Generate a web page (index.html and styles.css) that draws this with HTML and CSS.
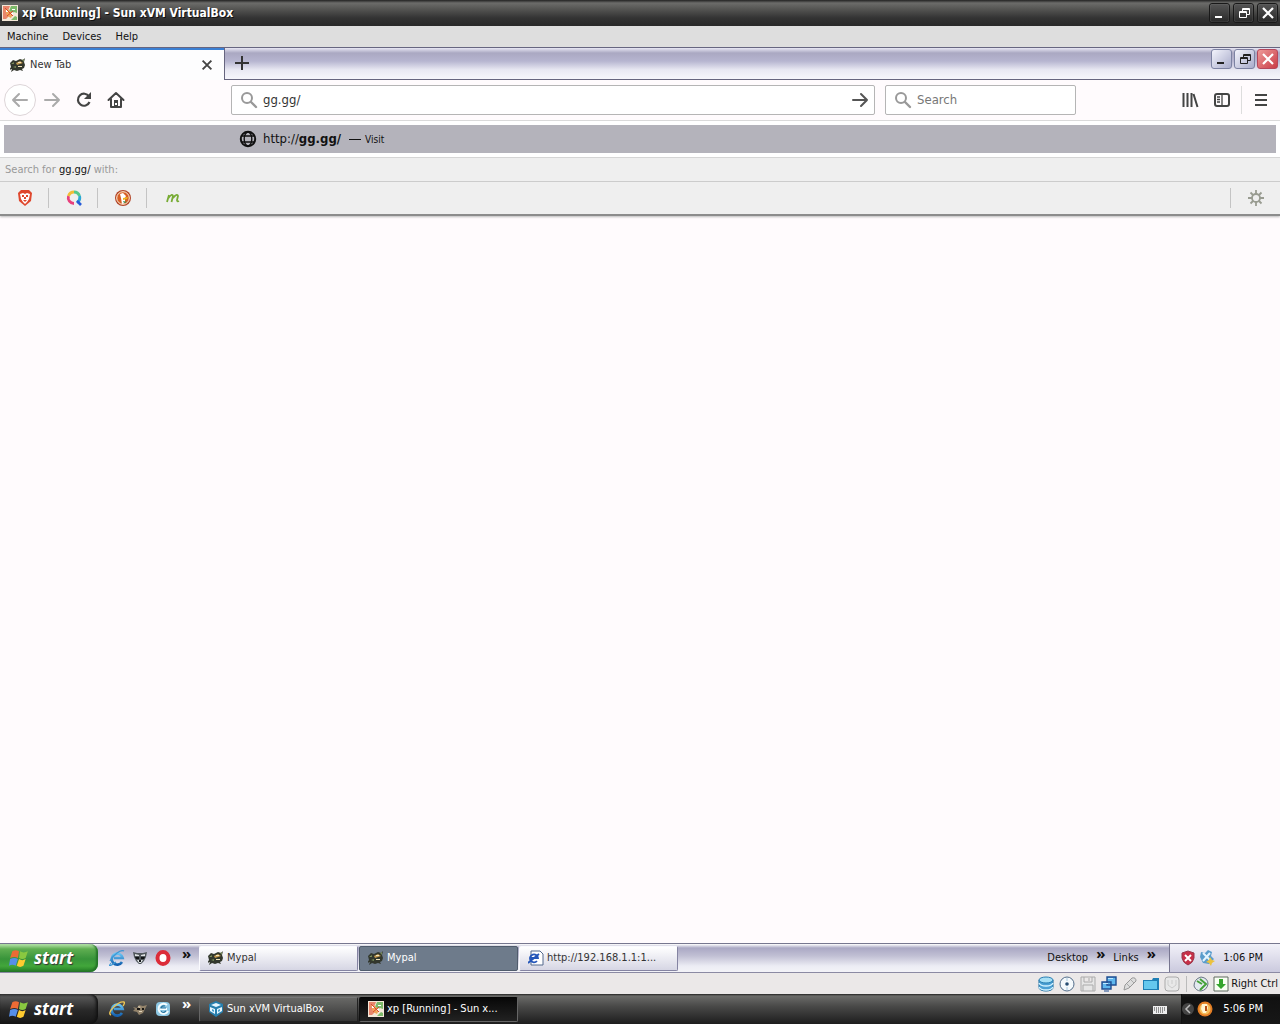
FILE: index.html
```
<!DOCTYPE html>
<html lang="en">
<head>
<meta charset="utf-8">
<title>xp [Running] - Sun xVM VirtualBox</title>
<link rel="stylesheet" href="styles.css">
</head>
<body>
<svg class="sprite" aria-hidden="true">
  <defs>
    <linearGradient id="ie-blue" x1="0" y1="0" x2="0" y2="1"><stop offset="0" stop-color="#68c4f4"/><stop offset="1" stop-color="#1562b0"/></linearGradient>
  </defs>
  <symbol id="vm" viewBox="0 0 16 16"><path fill="#f4e8d8" d="M0 0h16v16H0z"/><path fill="#e8866c" d="M1 1h7l-2 5 3 3-5 5H1z"/><path fill="#7cba6a" d="M9 1h6v7l-3-1-3 2-2-3zM9 15l4-4 2 1v3z"/><path fill="#f1a65a" d="M3 4l4 1 4 4-2 4-4-2z"/><path fill="#fff" d="M4 5h2v2H4zM10 4h3v1h-3zM8 9l3-2v3z"/><path d="M3 3l8 8M5 11l6-5" stroke="#d9492e"/></symbol>
  <symbol id="mypal" viewBox="0 0 16 16"><path fill="#32372d" d="M0 6l3-3 3 1 4-2 3 1 2-2-1 4 1 3-1 3-2 1 1 2-3-1-3 1-3-1-3 2 1-3-3 1 2-3z"/><path fill="#c39a50" d="M6 6l4-2 3 2-3 1-3 1z"/><path fill="#f1e4bc" d="M8 5h3v1H8zM8 9h4v1H8zM2 6h2v1H2z"/><path fill="#758858" d="M1 7l3-2v2zM12 3l2-1v3zM3 10l3-1v2z"/></symbol>
  <symbol id="raccoon" viewBox="0 0 16 16"><path fill="#4f565c" d="M1 2l4 1h6l4-1-1 5-2 4-3 3H7l-3-3-2-4z"/><path fill="#dce0e2" d="M3 4l4 1v1H3zM9 5l4-1v2H9zM5 10h6l-2 3H7z"/><path fill="#101316" d="M3 7h4v2H4zM9 7h4l-1 2H9zM7 10h2v2H7z"/></symbol>
  <symbol id="search" viewBox="0 0 18 18"><circle cx="7" cy="7" r="5" fill="none" stroke="currentColor" stroke-width="2"/><path d="M11 11l5 5" stroke="currentColor" stroke-width="2.4" stroke-linecap="round"/></symbol>
  <symbol id="arrow" viewBox="0 0 18 18"><path d="M2 9h14M10 3l6 6-6 6" fill="none" stroke="currentColor" stroke-width="2" stroke-linecap="round" stroke-linejoin="round"/></symbol>
  <symbol id="close" viewBox="0 0 16 16"><path d="M3 3l10 10M13 3L3 13" stroke="currentColor" stroke-width="2.2"/></symbol>
  <symbol id="minimize" viewBox="0 0 16 16"><path fill="currentColor" d="M3 11h7v2H3z"/></symbol>
  <symbol id="restore" viewBox="0 0 16 16"><path fill="none" stroke="currentColor" d="M6.500 6V3.500h7v6H11M3.500 6.500h7v6h-7zM6 4.500h8M3 7.500h8"/></symbol>
  <symbol id="ie" viewBox="0 0 16 16"><path d="M13 12a5.500 5.500 0 1 1 .7-4H5" fill="none" stroke="url(#ie-blue)" stroke-width="2.600"/><path d="M2 13c-4 5 1 2 5-1M15 1C12-1 4 5 1 11" fill="none" stroke="#3e97d4" stroke-width="1.200"/></symbol>
  <symbol id="ie-gold" viewBox="0 0 16 16"><path d="M13 12a5.500 5.500 0 1 1 .7-4H5" fill="none" stroke="url(#ie-blue)" stroke-width="2.600"/><path d="M2 14c-5-2 7-14 13-13 1 0 0 3-1 4" fill="none" stroke="#efc754" stroke-width="1.400"/></symbol>
  <symbol id="flag" viewBox="0 0 18 18"><path fill="#ed6b35" d="M3 3q3-2 6 0L8 9Q5 7 1 9z"/><path fill="#89c840" d="M10 3q3 2 7 0l-2 6q-3 2-6 0z"/><path fill="#568fe9" d="M1 10q4-2 7 0l-2 6q-3-2-6 0z"/><path fill="#ffcb30" d="M9 10q3 2 6 0l-2 6q-3 2-6 0z"/></symbol>
  <symbol id="discs" viewBox="0 0 16 16"><path fill="#4ca0d4" stroke="#17689c" d="M1 4v8c1 4 13 4 14 0V4"/><ellipse cx="8" cy="4" rx="7" ry="3" fill="#a8e0f5" stroke="#287fb3"/><path d="M1 7c2 4 12 4 14 0M1 11c2 4 12 4 14 0" fill="none" stroke="#d2f2ff" stroke-width="1.500"/></symbol>
  <symbol id="cd" viewBox="0 0 16 16"><circle cx="8" cy="8" r="7" fill="#f4f9fc" stroke="#526d8a"/><circle cx="8" cy="8" r="1.800" fill="#274d72"/><path d="M8 2v3M8 11v3" stroke="#a4c6de"/></symbol>
  <symbol id="floppy" viewBox="0 0 16 16"><path fill="#e6e6e6" stroke="#aaa" d="M1 1h14v14H1zM4 1v5h8V1M3 15V9h10v6M9 2v3"/></symbol>
  <symbol id="network" viewBox="0 0 16 16"><path fill="#5eb7ee" stroke="#1f4d91" stroke-width="1.400" d="M6 1h9v8H6zM1 6h9v7H1z"/><path fill="#bde7ff" d="M7 2h5v1H7zM2 7h5v1H2z"/><path d="M3 15h5" stroke="#1f4d91"/></symbol>
  <symbol id="usb" viewBox="0 0 16 16"><path fill="#ddd" stroke="#999" d="M2 14l1-5 7-7q4-1 4 3L7 12z"/><path d="M5 8l3 3M9 4l3 3" stroke="#aaa"/></symbol>
  <symbol id="folder" viewBox="0 0 16 16"><path fill="#1f7fb5" d="M0 4h9l1-2h6v12H0z"/><path fill="#65c8ee" d="M1 5h13v8H1z"/></symbol>
  <symbol id="mouse" viewBox="0 0 16 16"><rect x="1" y="1" width="14" height="14" rx="3" fill="#e8e8e8" stroke="#aaa"/><path d="M4 4v5l4 3 4-3V4M8 4v4" fill="none" stroke="#ccc"/></symbol>
</svg>

<header class="host-title">
  <svg class="i16"><use href="#vm"/></svg>
  <h1>xp [Running] - Sun xVM VirtualBox</h1>
  <div class="window-controls dark">
    <button aria-label="Minimize"><svg><use href="#minimize"/></svg></button>
    <button aria-label="Restore"><svg><use href="#restore"/></svg></button>
    <button aria-label="Close"><svg><use href="#close"/></svg></button>
  </div>
</header>
<nav class="menu"><button>Machine</button><button>Devices</button><button>Help</button></nav>

<div class="tabs">
  <div class="tab"><svg class="i16"><use href="#mypal"/></svg><span>New Tab</span><button aria-label="Close tab"><svg class="i14"><use href="#close"/></svg></button></div>
  <button class="new-tab" aria-label="New tab"><svg viewBox="0 0 16 16"><path d="M8 1v14M1 8h14" stroke="currentColor" stroke-width="2"/></svg></button>
  <div class="window-controls light">
    <button aria-label="Minimize browser"><svg><use href="#minimize"/></svg></button>
    <button aria-label="Restore browser"><svg><use href="#restore"/></svg></button>
    <button class="red" aria-label="Close browser"><svg><use href="#close"/></svg></button>
  </div>
</div>

<div class="toolbar">
  <div class="nav-buttons">
    <button class="back" aria-label="Back"><svg class="flip"><use href="#arrow"/></svg></button>
    <button class="forward" aria-label="Forward"><svg><use href="#arrow"/></svg></button>
    <button aria-label="Reload"><svg viewBox="0 0 18 18"><path d="M14.500 11a6 6 0 1 1-.5-5.500" fill="none" stroke="currentColor" stroke-width="2.200"/><path d="M16 1v7H9z" fill="currentColor"/></svg></button>
    <button aria-label="Home"><svg viewBox="0 0 18 18"><path d="M1.500 9L9 2l7.500 7M4 8v8h10V8" fill="none" stroke="currentColor" stroke-width="2" stroke-linejoin="round" stroke-linecap="round"/><path fill="currentColor" d="M7 9h4v7H7z"/><path fill="#fff" d="M8 12h2v2H8z"/></svg></button>
  </div>
  <div class="field url"><svg><use href="#search"/></svg><input aria-label="Address" value="gg.gg/"><button aria-label="Go"><svg><use href="#arrow"/></svg></button></div>
  <div class="field find"><svg><use href="#search"/></svg><input aria-label="Search" placeholder="Search"></div>
  <div class="tools">
    <button aria-label="Library"><svg viewBox="0 0 18 18"><path d="M2.500 2v14M6.500 2v14M10.500 2v14M12.500 3l4 13" stroke="currentColor" stroke-width="2"/></svg></button>
    <button aria-label="Sidebars"><svg viewBox="0 0 18 18"><rect x="2" y="3" width="14" height="12" rx="2" fill="none" stroke="currentColor" stroke-width="2"/><path d="M9 3v12M4 6h3M4 8.500h3M4 11h3" stroke="currentColor" stroke-width="1.300"/></svg></button>
    <button class="hamburger" aria-label="Menu"><svg viewBox="0 0 18 18"><path d="M3 4h12M3 9h12M3 14h12" stroke="currentColor" stroke-width="2"/></svg></button>
  </div>
</div>

<section class="suggestions">
  <a class="result" href="http://gg.gg/">
    <svg viewBox="0 0 18 18"><circle cx="9" cy="9" r="7.200" fill="none" stroke="currentColor" stroke-width="2"/><ellipse cx="9" cy="9" rx="3.800" ry="7" fill="none" stroke="currentColor" stroke-width="1.400"/><path d="M2 6h14M2 12h14" stroke="currentColor" stroke-width="1.600"/></svg>
    <span class="address">http://<b>gg.gg/</b></span><span class="dash"></span><span class="visit">Visit</span>
  </a>
  <p class="with">Search for <span>gg.gg/</span> with:</p>
  <div class="engines">
    <button aria-label="Brave"><svg class="i16" viewBox="0 0 16 16"><path fill="#df472d" d="M4 0h8l3 3-1 8-6 5-6-5-1-8z"/><path fill="#fff" d="M3 4l3-1 2 1 2-1 3 1-1 5-2 3-2 2-2-2-2-3z"/><path fill="#df472d" d="M5 5h2v2H5zM9 5h2v2H9zM7 7h2v2H7zM6 10h4l-2 2z"/></svg></button>
    <button aria-label="Qwant"><svg class="i16" viewBox="0 0 16 16"><g fill="none" stroke-width="2.800"><path stroke="#e8407c" d="M8 13.500A5.800 5.800 0 0 1 2.500 6"/><path stroke="#f1bd37" d="M2.500 6A5.800 5.800 0 0 1 8 2"/><path stroke="#55c98b" d="M8 2a5.800 5.800 0 0 1 5.500 4"/><path stroke="#2ba8d5" d="M13.500 6a5.800 5.800 0 0 1-2.500 6.500"/></g><path d="M11 11l4 4" stroke="#275bd9" stroke-width="2.600"/></svg></button>
    <button aria-label="DuckDuckGo"><svg class="i16" viewBox="0 0 16 16"><circle cx="8" cy="8" r="8" fill="#b34527"/><circle cx="8" cy="8" r="6.300" fill="#d75f25" stroke="#fff3da"/><path fill="#fff" d="M5 4l3-1 3 3-1 2v5l-3 1-1-6z"/><path fill="#edb51f" d="M8 8l5-1-1 2-4 1z"/><path fill="#2b8742" d="M8 11l4 1-3 1z"/></svg></button>
    <button aria-label="Mojeek"><svg class="i16" viewBox="0 0 16 16"><path d="M2 12L4 5M3.500 8Q7 3 8 6L6.500 12M8 8q4-5 5-2l-1 4q0 2 2 1" fill="none" stroke="#78ac35" stroke-width="1.800"/></svg></button>
    <button class="settings" aria-label="Search settings"><svg class="i16" viewBox="0 0 16 16"><circle cx="8" cy="8" r="4" fill="none" stroke="#999c91" stroke-width="1.800"/><path d="M8 0v4M8 12v4M0 8h4M12 8h4M2.500 2.500l2.500 2.500M11 11l2.500 2.500M13.500 2.500L11 5M5 11l-2.500 2.500" stroke="#999c91" stroke-width="1.800"/></svg></button>
  </div>
</section>
<main></main>

<footer class="taskbar guest">
  <button class="start"><svg><use href="#flag"/></svg><span>start</span></button>
  <div class="quick"><button aria-label="Internet Explorer"><svg class="i16"><use href="#ie"/></svg></button><button aria-label="Raccoon"><svg class="i16"><use href="#raccoon"/></svg></button><button aria-label="Opera"><svg class="i16" viewBox="0 0 16 16"><ellipse cx="8" cy="8" rx="5.500" ry="6" fill="#fff" stroke="#dc2c39" stroke-width="4"/></svg></button><span class="more">»</span></div>
  <div class="tasks"><button><svg class="i16"><use href="#mypal"/></svg>Mypal</button><button class="active"><svg class="i16"><use href="#mypal"/></svg>Mypal</button><button><svg class="i16" viewBox="0 0 16 16"><path fill="#fff" stroke="#52698c" d="M3 1h9l3 3v11H3z"/><path d="M9 11a4 4 0 1 1 1-3H3M0 13L11 4" fill="none" stroke="#2456b9" stroke-width="1.800"/></svg>http://192.168.1.1:1...</button></div>
  <div class="links"><a href="#desktop">Desktop</a><span class="more">»</span><a href="#links">Links</a><span class="more">»</span></div>
  <div class="tray"><svg class="i16" viewBox="0 0 16 16"><path fill="#c72f47" stroke="#98364a" d="M8 1l6 2v5q-1 5-6 7-5-2-6-7V3z"/><path d="M5 5l6 6M11 5l-6 6" stroke="#fff" stroke-width="2"/></svg><svg class="i16" viewBox="0 0 16 16"><path fill="#5a9ccc" d="M2 2l4 1 3-3 4 2-1 4 3 3-5 5-6-1-3-6z"/><path d="M4 3l8 8M11 3L4 11" stroke="#e3f4ff" stroke-width="2"/><path fill="#ecc23e" d="M11 7l2 3 3 1-3 2-1 3-2-3-3-1 3-2z"/></svg><time>1:06 PM</time></div>
</footer>

<div class="vm-status">
  <svg class="i16"><use href="#discs"/></svg><svg class="i16"><use href="#cd"/></svg><svg class="i16"><use href="#floppy"/></svg><svg class="i16"><use href="#network"/></svg><svg class="i16"><use href="#usb"/></svg><svg class="i16"><use href="#folder"/></svg><svg class="i16"><use href="#mouse"/></svg>
  <div class="host-key"><svg class="i16" viewBox="0 0 16 16"><path fill="#e3e9ef" stroke="#687683" d="M1 10q0-7 7-9 7 1 7 7-1 6-7 7-5 0-7-5z"/><path d="M7 3l6 5-6 6M4 5l5 3" fill="none" stroke="#45a139" stroke-width="2"/></svg><svg class="i16" viewBox="0 0 16 16"><path fill="#f8fff3" stroke="#606b60" d="M1 1h14v14H1z"/><path fill="#35a52d" d="M6 3h4v5h3l-5 5-5-5h3z"/></svg><span>Right Ctrl</span></div>
</div>

<footer class="taskbar host">
  <button class="start"><svg><use href="#flag"/></svg><span>start</span></button>
  <div class="quick"><button aria-label="Internet Explorer host"><svg class="i16"><use href="#ie-gold"/></svg></button><button aria-label="Mypal host"><svg class="i16" viewBox="0 0 16 16"><path fill="#93836b" d="M1 6l4 1 2-3 4 1 4-1-2 4-2 4-4 2-2-3-4-1 2-2z"/><path fill="#171614" d="M5 7h3v2H5zM10 7h2v2h-2z"/><path fill="#e2d5bb" d="M6 5l3 1-2 1zM7 10h3v1H7z"/></svg></button><button aria-label="Synchronize"><svg class="i16" viewBox="0 0 16 16"><rect x="1" y="1" width="14" height="14" rx="4" fill="#8ec8e4"/><path d="M12 4a5 5 0 1 0 1 6M5 8h7" fill="none" stroke="#f4fdff" stroke-width="2"/><path d="M10 5a3 3 0 0 0-4 2h5M6 10q2 3 5 0" fill="none" stroke="#28759f" stroke-width="1.200"/></svg></button><span class="more">»</span></div>
  <div class="tasks"><button><svg class="i16" viewBox="0 0 16 16"><path fill="#287fae" d="M1 3l7-3 7 3v8l-7 5-7-5z"/><path fill="#e6f6ff" d="M3 4l5-2 5 2-5 2zM2 6l5 2v5l-5-3zM9 8l5-2v4l-5 3z"/><path fill="#499fcb" d="M4 8l2 1v2l-2-1zM10 9l2-1v2l-2 1z"/></svg>Sun xVM VirtualBox</button><button class="active"><svg class="i16"><use href="#vm"/></svg>xp [Running] - Sun x...</button></div>
  <svg class="keyboard i16" viewBox="0 0 16 16"><path fill="#eee" d="M1 5h14v8H1z"/><path d="M2 7h12M2 9h12M4 11h8" stroke="#333" stroke-dasharray="1 1"/></svg>
  <div class="tray"><svg class="chevron" viewBox="0 0 12 16"><circle cx="6" cy="8" r="6" fill="#444"/><path d="M8 4L4 8l4 4" fill="none" stroke="#bbb" stroke-width="1.500"/></svg><svg class="i16" viewBox="0 0 16 16"><circle cx="8" cy="8" r="7.500" fill="#e37d24"/><circle cx="8" cy="8" r="5.500" fill="#f5bd5a"/><path fill="#fff5d2" d="M5 3h5l1 4-2 5H6L4 8z"/><path fill="#b64e15" d="M8 5h2v5H8z"/></svg><time>5:06 PM</time></div>
</footer>
</body>
</html>
```
FILE: styles.css
```
* { box-sizing: border-box; }
body {
  margin: 0;
  min-height: 100vh;
  display: flex;
  flex-direction: column;
  background: #fffbfd;
  color: #111;
  font: 11px/16px "DejaVu Sans Condensed", "Noto Sans", sans-serif;
}
button, input { font: inherit; color: inherit; }
button {
  display: flex;
  align-items: center;
  justify-content: center;
  padding: 0;
  border: 0;
  background: none;
}
a { color: inherit; text-decoration: none; }
svg { flex: none; width: 18px; height: 18px; }
.sprite { position: absolute; width: 0; height: 0; }
.i16 { width: 16px; height: 16px; }
.i14 { width: 14px; height: 14px; }

.host-title {
  display: flex;
  align-items: center;
  gap: 4px;
  height: 26px;
  padding: 0 2px;
  color: #fff;
  background: linear-gradient(#222 0, #6c6c6a 3px, #51514f 10px, #333 18px, #292929);
}
.host-title h1 {
  margin: 0;
  font: bold 12px/16px "DejaVu Sans Condensed", "Noto Sans", sans-serif;
  text-shadow: 1px 1px #111;
}
.window-controls { display: flex; gap: 3px; margin-left: auto; }
.window-controls svg { width: 16px; height: 16px; }
.window-controls button { width: 21px; height: 20px; border-radius: 3px; }
.dark button { border: 1px solid #191919; box-shadow: inset 0 0 1px #aaa; background: linear-gradient(#555, #292929); }
.light button { border: 1px solid #7c82a2; background: linear-gradient(135deg, #f3f4fc, #a9accb); color: #222; }
.light .red { border-color: #b6475b; background: linear-gradient(135deg, #ed9a98, #ca3c47); color: #fff; }

.menu {
  display: flex;
  gap: 14px;
  height: 21px;
  padding: 0 7px;
  background: #dedede;
}

.tabs {
  display: flex;
  height: 33px;
  border-top: 1px solid #676680;
  background: linear-gradient(#e8e7f4 0, #aaa8c2 5px, #b6b5d0 13px, #e9e9f3 22px, #f7f7fc);
}
.tab {
  display: flex;
  align-items: center;
  gap: 4px;
  width: 224px;
  padding: 0 10px;
  border-top: 2px solid #3b80d4;
  background: #fdfdfe;
  color: #333;
}
.tab button { margin-left: auto; color: #444; }
.new-tab { width: 34px; padding-bottom: 2px; border-left: 1px solid #66657f; border-bottom: 1px solid #66657f; color: #333; }
.new-tab svg { width: 16px; height: 16px; }
.light { flex: 1; justify-content: flex-end; padding: 1px 2px 0; gap: 2px; border-bottom: 1px solid #66657f; }

.toolbar {
  display: flex;
  align-items: center;
  height: 41px;
  padding: 0 4px;
  border-bottom: 1px solid #ddd;
  color: #444;
}
.nav-buttons { display: flex; width: 227px; }
.nav-buttons button { width: 32px; height: 32px; }
.nav-buttons .back { border: 1px solid #ddd5d8; border-radius: 50%; background: #fff; color: #aaa; }
.nav-buttons .forward { color: #aaa; }
.flip { transform: scaleX(-1); }
.field {
  display: flex;
  align-items: center;
  gap: 5px;
  height: 30px;
  padding: 0 5px 0 8px;
  border: 1px solid #b5b5b5;
  border-radius: 2px;
  background: #fff;
  color: #999;
}
.field input { flex: 1; min-width: 0; padding: 0; border: 0; outline: 0; background: none; font-size: 13px; color: #333; }
.field input::placeholder { color: #777; opacity: 1; }
.field button { color: #555; }
.url { flex: 1; margin-right: 10px; }
.find { width: 191px; }
.tools { display: flex; width: 200px; padding-right: 3px; justify-content: flex-end; }
.tools button { width: 32px; height: 28px; }
.tools .hamburger { margin-left: 3px; border-left: 1px solid #ddd; padding-left: 6px; }

.suggestions { background: #efefef; border-bottom: 2px solid #8c8c8c; box-shadow: 0 1px 2px #bbb; }
.result {
  display: flex;
  align-items: center;
  height: 36px;
  padding-left: 235px;
  border: 4px solid #fff;
  background: #b4b3bb;
}
.address { margin-left: 6px; font-size: 13px; }
.dash { width: 12px; margin: 0 4px 0 8px; border-top: 1px solid #111; }
.visit { font-size: 10px; padding-top: 2px; }
.with { margin: 0; height: 25px; padding: 4px 5px; border-top: 1px solid #d5d5d5; border-bottom: 1px solid #ccc; color: #999; }
.with span { color: #111; }
.engines { display: flex; align-items: center; height: 32px; }
.engines button { width: 49px; height: 20px; padding-left: 2px; border-right: 1px solid #c4c4c4; }
.engines button:nth-child(4) { border: 0; }
.engines .settings { width: 50px; padding: 0; margin-left: auto; border-right: 0; border-left: 1px solid #c4c4c4; }
main { flex: 1; }

.taskbar { display: flex; align-items: center; height: 30px; }
.start {
  width: 98px;
  height: 100%;
  gap: 5px;
  padding-right: 16px;
  border-radius: 0 8px 8px 0;
  color: #fff;
  font: italic bold 17px/24px "Open Sans", sans-serif;
  text-shadow: 1px 1px 1px #333;
}
.start svg { width: 20px; height: 20px; }
.quick { display: flex; align-items: center; gap: 7px; width: 101px; height: 100%; padding-left: 11px; }
.more { align-self: flex-start; font: bold 15px/18px "Noto Sans", sans-serif; }
.quick .more { margin-left: 4px; }
.tasks { display: flex; gap: 1px; }
.tasks button {
  justify-content: flex-start;
  gap: 3px;
  width: 159px;
  height: 25px;
  padding-left: 8px;
  border: 1px solid;
  border-radius: 2px;
  white-space: nowrap;
}
.tray { display: flex; align-items: center; gap: 3px; height: 100%; }
.tray time { margin-left: auto; }

.guest { border-top: 1px solid #77778f; border-bottom: 1px solid #8b8aa3; background: linear-gradient(#fff 0, #aaa8c4 4px, #c1c0d4 12px, #ececf4 22px, #f3f3f8); }
.guest .start { background: linear-gradient(#bbe6ae 0, #5fae51 5px, #38943a 15px, #42a63b 22px, #237c25); box-shadow: inset -2px -1px 2px #247328; }
.guest .tasks button { border-color: #fafafe #8584a2 #8584a2 #fafafe; background: linear-gradient(#fff, #d6d6e4); color: #333; }
.guest .tasks .active { border-color: #505c6c; background: #6e7b8b; color: #fff; }
.links { display: flex; align-items: center; gap: 8px; height: 100%; margin-left: auto; padding-right: 13px; }
.guest .tray { width: 111px; padding: 0 17px 0 10px; border-left: 1px solid #777690; background: linear-gradient(#f2f1f9, #cbcade); }

.vm-status { display: flex; align-items: center; justify-content: flex-end; gap: 5px; height: 21px; padding-right: 2px; background: #ebe8e8; }
.host-key { display: flex; align-items: center; gap: 4px; margin-left: 1px; padding-left: 6px; border-left: 1px solid #bbb; }
.host-key span { margin-left: -2px; }

.host { color: #fff; background: linear-gradient(#222 0, #6b6b69 2px, #4a4a49 12px, #292929 25px, #1d1d1d); }
.host .start { background: linear-gradient(#444 0, #555 3px, #292929 16px, #171717); box-shadow: inset -2px 0 3px #111; }
.host .tasks button { border-color: #777 #222 #222 #666; background: linear-gradient(#686866, #353535); }
.host .tasks .active { border-color: #050505 #666 #666 #111; background: linear-gradient(#080808, #222); }
.keyboard { margin-left: auto; }
.host .tray { width: 99px; margin-left: 13px; padding: 0 17px 0 0; border-left: 1px solid #111; background: linear-gradient(#222, #111 4px, #171717); }
.chevron { width: 12px; height: 16px; }
```
